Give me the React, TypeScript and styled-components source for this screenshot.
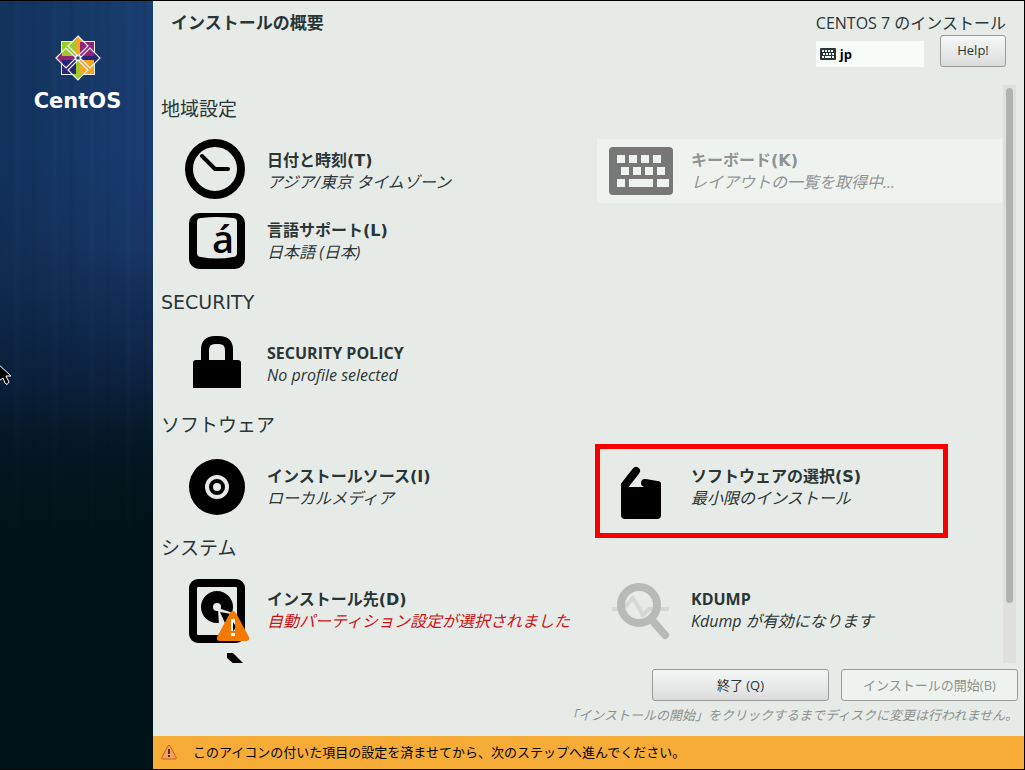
import React from "react";
import styled, { createGlobalStyle } from "styled-components";

const ink = "#2a3636";
const surface = "#e7ebe8";

const GlobalStyle = createGlobalStyle`
  * { box-sizing: border-box; }
  body {
    margin: 0;
    background: #000;
    color: ${ink};
    font-family: "Open Sans", "Noto Sans CJK JP", sans-serif;
    font-size: 16px;
  }
  h1, h2, p { margin: 0; }
`;

const Screen = styled.div`
  position: relative;
  display: flex;
  height: 100vh;
  border: 1px solid #000;
  border-left: 0;
  overflow: hidden;
`;

const Sidebar = styled.aside`
  flex: 0 0 153px;
  display: flex;
  flex-direction: column;
  align-items: center;
  gap: 6px;
  padding: 34px 0 0 2px;
  background:
    linear-gradient(180deg, transparent 0, transparent 50%, #001417 72%),
    repeating-linear-gradient(90deg, transparent 0 14px, rgba(90, 120, 190, 0.04) 17px 18px, transparent 22px 31px, rgba(0, 10, 20, 0.06) 34px, transparent 37px),
    linear-gradient(90deg, rgba(0, 24, 40, 0.3), transparent),
    linear-gradient(180deg, #193e70 0, #193c72 20%, #173766 32%, #0d2444 48%, #061a2c 58%, #001417 72%);
`;

const Wordmark = styled.span`
  font: bold 21px/28px "DejaVu Sans", sans-serif;
  color: #fff;
`;

const Main = styled.main`
  flex: 1;
  min-width: 0;
  display: flex;
  flex-direction: column;
  background: ${surface};
`;

const Header = styled.header`
  flex: 0 0 84px;
  display: flex;
  justify-content: space-between;
  padding: 10px 18px 0;
`;

const PageTitle = styled.h1`
  font-size: 17px;
  line-height: 24px;
  font-weight: 700;
`;

const ProductArea = styled.div`
  display: flex;
  flex-direction: column;
  align-items: stretch;
`;

const ProductName = styled.span`
  font-size: 16px;
  line-height: 24px;
  white-space: nowrap;
`;

const HeaderTools = styled.div`
  display: flex;
  align-items: center;
  justify-content: space-between;
`;

const LayoutIndicator = styled.div`
  display: flex;
  align-items: center;
  gap: 4px;
  width: 108px;
  height: 26px;
  margin-top: 6px;
  padding-left: 4px;
  background: #f8fcf9;
  color: #000;
  font-size: 13px;
  font-weight: 700;
`;

const Button = styled.button<{ $width: number }>`
  width: ${(p) => p.$width}px;
  height: 32px;
  padding: 0 0 2px;
  border: 1px solid #989b99;
  border-radius: 3px;
  background: linear-gradient(#f5f7f6, #e9ebea 50%, #dadada);
  color: ${ink};
  font-family: inherit;
  font-size: 13px;
  &:disabled {
    background: #eff3f0;
    color: #8c918f;
  }
`;

const ListArea = styled.div`
  flex: 1;
  min-height: 0;
  display: flex;
  padding: 0 8px;
`;

const SpokeList = styled.div`
  flex: 1;
  min-width: 0;
  display: flex;
  flex-direction: column;
  gap: 15px;
  padding-top: 10px;
  overflow: hidden;
`;

const SectionBlock = styled.section`
  flex: none;
`;

const SectionTitle = styled.h2`
  margin-bottom: 16px;
  font-family: "DejaVu Sans", "Noto Sans CJK JP", sans-serif;
  font-size: 19px;
  line-height: 28px;
  font-weight: 400;
`;

const SpokeGrid = styled.div`
  display: grid;
  grid-template-columns: repeat(2, minmax(0, 1fr));
  gap: 6px 18px;
  padding-left: 12px;
`;

const SpokeButton = styled.button`
  position: relative;
  display: flex;
  align-items: center;
  gap: 18px;
  height: 64px;
  padding: 0 12px;
  border: 0;
  background: transparent;
  color: ${ink};
  font-family: inherit;
  text-align: left;
  &:disabled {
    background: #eff3f0;
    color: #8f9492;
  }
`;

const SpokeText = styled.span`
  display: flex;
  flex-direction: column;
  line-height: 22px;
  white-space: nowrap;
`;

const SpokeName = styled.span`
  height: 22px;
  font-size: 16px;
  font-weight: 700;
`;

const AccessKey = styled.span`
  font-family: "DejaVu Sans", sans-serif;
`;

const SpokeStatus = styled.span<{ $alert?: boolean }>`
  font-size: 16px;
  font-style: italic;
  color: ${(p) => (p.$alert ? "#cc1313" : "inherit")};
`;

const Highlight = styled.span`
  position: absolute;
  top: -11px;
  left: -2px;
  width: 353px;
  height: 94px;
  border: 5px solid #f60000;
`;

const ScrollTrack = styled.div`
  flex: 0 0 13px;
  padding: 3px;
  background: #dfdfdf;
`;

const ScrollThumb = styled.div`
  height: 90%;
  border-radius: 4px;
  background: #afb3b0;
`;

const Footer = styled.footer`
  display: flex;
  flex-direction: column;
  align-items: flex-end;
  gap: 4px;
  padding: 6px 6px 11px;
`;

const Actions = styled.div`
  display: flex;
  gap: 12px;
`;

const Hint = styled.p`
  font-size: 13px;
  line-height: 20px;
  font-style: italic;
  color: #8c918f;
`;

const WarningBar = styled.div`
  flex: 0 0 33px;
  display: flex;
  align-items: center;
  gap: 16px;
  padding: 0 0 2px 8px;
  background: #f6ac36;
  color: #000;
  font-size: 13px;
`;

const Icon = styled.svg`
  flex: none;
  display: block;
`;

const Pointer = styled.svg`
  position: absolute;
  top: 364px;
  left: 0;
`;

function CentosLogo() {
  return (
    <Icon width="46" height="46" viewBox="-23 -23 46 46" aria-hidden="true">
      <g stroke="#e4ecf2" strokeWidth="1">
        <rect x="-16.500" y="-16.500" width="15" height="15" fill="#9ccd2a" />
        <rect x="1.500" y="-16.500" width="15" height="15" fill="#932279" />
        <rect x="-16.500" y="1.500" width="15" height="15" fill="#262577" />
        <rect x="1.500" y="1.500" width="15" height="15" fill="#efa724" />
      </g>
      {[
        [0, "#efa724"],
        [90, "#262577"],
        [180, "#9ccd2a"],
        [270, "#932279"],
      ].map(([angle, fill]) => (
        <g key={angle} transform={`rotate(${angle})`}>
          <path d="M0-22 6-16H2V-3H-2V-16H-6Z" fill={fill as string} />
          <path d="M0-22 10-12 0-2-10-12Z" fill="none" stroke="#f4f4fa" strokeWidth="1.200" />
        </g>
      ))}
      <rect x="-2" y="-2" width="4" height="4" fill="#1d4a6a" stroke="#f4f4fa" />
    </Icon>
  );
}

const SpokeIcon = ({ children }: { children: React.ReactNode }) => (
  <Icon width="64" height="64" viewBox="0 0 64 64" overflow="visible" aria-hidden="true">
    {children}
  </Icon>
);

const clock = (
  <SpokeIcon>
    <circle cx="30" cy="30" r="26" fill="none" stroke="#000" strokeWidth="8" />
    <path d="M17 17 30 30H43" fill="none" stroke="#000" strokeWidth="4" strokeLinecap="round" strokeLinejoin="round" />
  </SpokeIcon>
);

const keyboard = (
  <SpokeIcon>
    <rect y="8" width="64" height="48" rx="4" fill="#777" />
    <path
      d="M8 16h8v8H8zM20 16h8v8h-8zM32 16h8v8h-8zM44 16h8v8h-8zM12 28h8v8h-8zM24 28h8v8h-8zM36 28h8v8h-8zM48 28h8v8h-8zM8 40h8v8H8zM20 40h24v8H20zM48 40h12v8H48z"
      fill="#eff3f0"
    />
  </SpokeIcon>
);

const language = (
  <SpokeIcon>
    <rect x="4" y="4" width="56" height="56" rx="10" fill="#000" />
    <path d="M16 9Q32 7 48 9 52 9 52 13V44Q52 48 48 48 32 51 16 48 12 48 12 44V13Q12 9 16 9Z" fill={surface} />
    <text x="27" y="44" fontFamily="Open Sans" fontWeight="600" fontSize="38" fill="#000">á</text>
  </SpokeIcon>
);

const lock = (
  <SpokeIcon>
    <path d="M20 30V18Q20 8 30 8H34Q44 8 44 18V30" fill="none" stroke="#000" strokeWidth="8" />
    <path d="M8 56V31Q8 28 11 28H53Q56 28 56 31V56Z" />
  </SpokeIcon>
);

const disc = (
  <SpokeIcon>
    <circle cx="32" cy="32" r="28" />
    <circle cx="32" cy="32" r="10" fill="none" stroke={surface} strokeWidth="4" />
    <circle cx="32" cy="32" r="4" fill={surface} />
  </SpokeIcon>
);

const bag = (
  <SpokeIcon>
    <path d="M12 32H52V60Q52 64 48 64H16Q12 64 12 60Z" />
    <path d="M27 16 16 30M36 28 48 30" fill="none" stroke="#000" strokeWidth="8" strokeLinecap="round" />
    <path d="M12 28V36H20ZM48 26Q52 26 52 30V36H44Z" />
  </SpokeIcon>
);

const disk = (
  <SpokeIcon>
    <rect x="8" y="5" width="48" height="56" rx="5" fill="none" stroke="#000" strokeWidth="8" />
    <circle cx="32" cy="29" r="16" />
    <circle cx="32" cy="29" r="4" fill={surface} />
    <path d="M33 30 48 35V48H34Z" fill={surface} />
    <path d="M35 34 46 36 52 54H44Z" />
    <path d="M45 35Q48 31 51 35L64 59Q65 63 61 63H35Q31 63 32 59Z" fill="#f57900" />
    <path d="M46 41h4v12h-4zM46 55h4v3h-4z" fill="#fff" />
    <path d="M48 44 50 47V51L48 53Z" />
  </SpokeIcon>
);

const kdump = (
  <SpokeIcon>
    <path d="M3 31H14L24 20 34 37 40 31H60" fill="none" stroke="#d3d8d5" strokeWidth="4" />
    <circle cx="30" cy="27" r="18" fill="none" stroke="#b6bbb8" strokeWidth="8" />
    <path d="M43 42 56 57" stroke="#b6bbb8" strokeWidth="8" strokeLinecap="round" />
  </SpokeIcon>
);

const network = (
  <SpokeIcon>
    <path d="M42 5H48L62 19 58 24 42 10Z" />
  </SpokeIcon>
);

type SpokeProps = {
  icon: React.ReactNode;
  name: string;
  accessKey?: string;
  status: string;
  disabled?: boolean;
  alert?: boolean;
  marked?: boolean;
};

function Spoke({ icon, name, accessKey, status, disabled, alert, marked }: SpokeProps) {
  return (
    <SpokeButton type="button" disabled={disabled}>
      {icon}
      <SpokeText>
        <SpokeName>
          {name}
          {accessKey && <AccessKey>({accessKey})</AccessKey>}
        </SpokeName>
        <SpokeStatus $alert={alert}>{status}</SpokeStatus>
      </SpokeText>
      {marked && <Highlight />}
    </SpokeButton>
  );
}

function Section({ title, children }: { title: string; children: React.ReactNode }) {
  return (
    <SectionBlock>
      <SectionTitle>{title}</SectionTitle>
      <SpokeGrid>{children}</SpokeGrid>
    </SectionBlock>
  );
}

export default function App() {
  return (
    <>
      <GlobalStyle />
      <Screen>
        <Sidebar>
          <CentosLogo />
          <Wordmark>CentOS</Wordmark>
        </Sidebar>
        <Main>
          <Header>
            <PageTitle>インストールの概要</PageTitle>
            <ProductArea>
              <ProductName>CENTOS 7 のインストール</ProductName>
              <HeaderTools>
                <LayoutIndicator>
                  <Icon width="16" height="12" viewBox="0 0 16 12" aria-hidden="true">
                    <rect width="16" height="12" rx="1" fill={ink} />
                    <path
                      d="M2 2h2v2H2zM5 2h2v2H5zM8 2h2v2H8zM11 2h2v2h-2zM3 5h2v2H3zM6 5h2v2H6zM9 5h2v2H9zM12 5h2v2h-2zM2 8h2v2H2zM5 8h6v2H5zM12 8h2v2h-2z"
                      fill="#f8fcf9"
                    />
                  </Icon>
                  jp
                </LayoutIndicator>
                <Button type="button" $width={66}>Help!</Button>
              </HeaderTools>
            </ProductArea>
          </Header>
          <ListArea>
            <SpokeList>
              <Section title="地域設定">
                <Spoke icon={clock} name="日付と時刻" accessKey="T" status="アジア/東京 タイムゾーン" />
                <Spoke icon={keyboard} name="キーボード" accessKey="K" status="レイアウトの一覧を取得中..." disabled />
                <Spoke icon={language} name="言語サポート" accessKey="L" status="日本語 (日本)" />
              </Section>
              <Section title="SECURITY">
                <Spoke icon={lock} name="SECURITY POLICY" status="No profile selected" />
              </Section>
              <Section title="ソフトウェア">
                <Spoke icon={disc} name="インストールソース" accessKey="I" status="ローカルメディア" />
                <Spoke icon={bag} name="ソフトウェアの選択" accessKey="S" status="最小限のインストール" marked />
              </Section>
              <Section title="システム">
                <Spoke icon={disk} name="インストール先" accessKey="D" status="自動パーティション設定が選択されました" alert />
                <Spoke icon={kdump} name="KDUMP" status="Kdump が有効になります" />
                <SpokeButton type="button">{network}</SpokeButton>
              </Section>
            </SpokeList>
            <ScrollTrack>
              <ScrollThumb />
            </ScrollTrack>
          </ListArea>
          <Footer>
            <Actions>
              <Button type="button" $width={177}>終了 (Q)</Button>
              <Button type="button" $width={177} disabled>インストールの開始(B)</Button>
            </Actions>
            <Hint>「インストールの開始」をクリックするまでディスクに変更は行われません。</Hint>
          </Footer>
          <WarningBar>
            <Icon width="16" height="16" viewBox="0 0 16 16" aria-hidden="true">
              <path d="M7 2Q8 0 9 2L15 13Q16 15 14 15H2Q0 15 1 13Z" fill="#f3a060" stroke="#d3600c" />
              <path d="M7 5h2v5H7zM7 11h2v2H7z" fill="#3a3a36" />
            </Icon>
            このアイコンの付いた項目の設定を済ませてから、次のステップへ進んでください。
          </WarningBar>
        </Main>
        <Pointer width="13" height="22" viewBox="0 0 13 22" aria-hidden="true">
          <path d="M-4-3 11 11H6L9 17Q7 21 5 18L3 13-4 18Z" fill="#000" stroke="#fff" strokeWidth="1" />
        </Pointer>
      </Screen>
    </>
  );
}
